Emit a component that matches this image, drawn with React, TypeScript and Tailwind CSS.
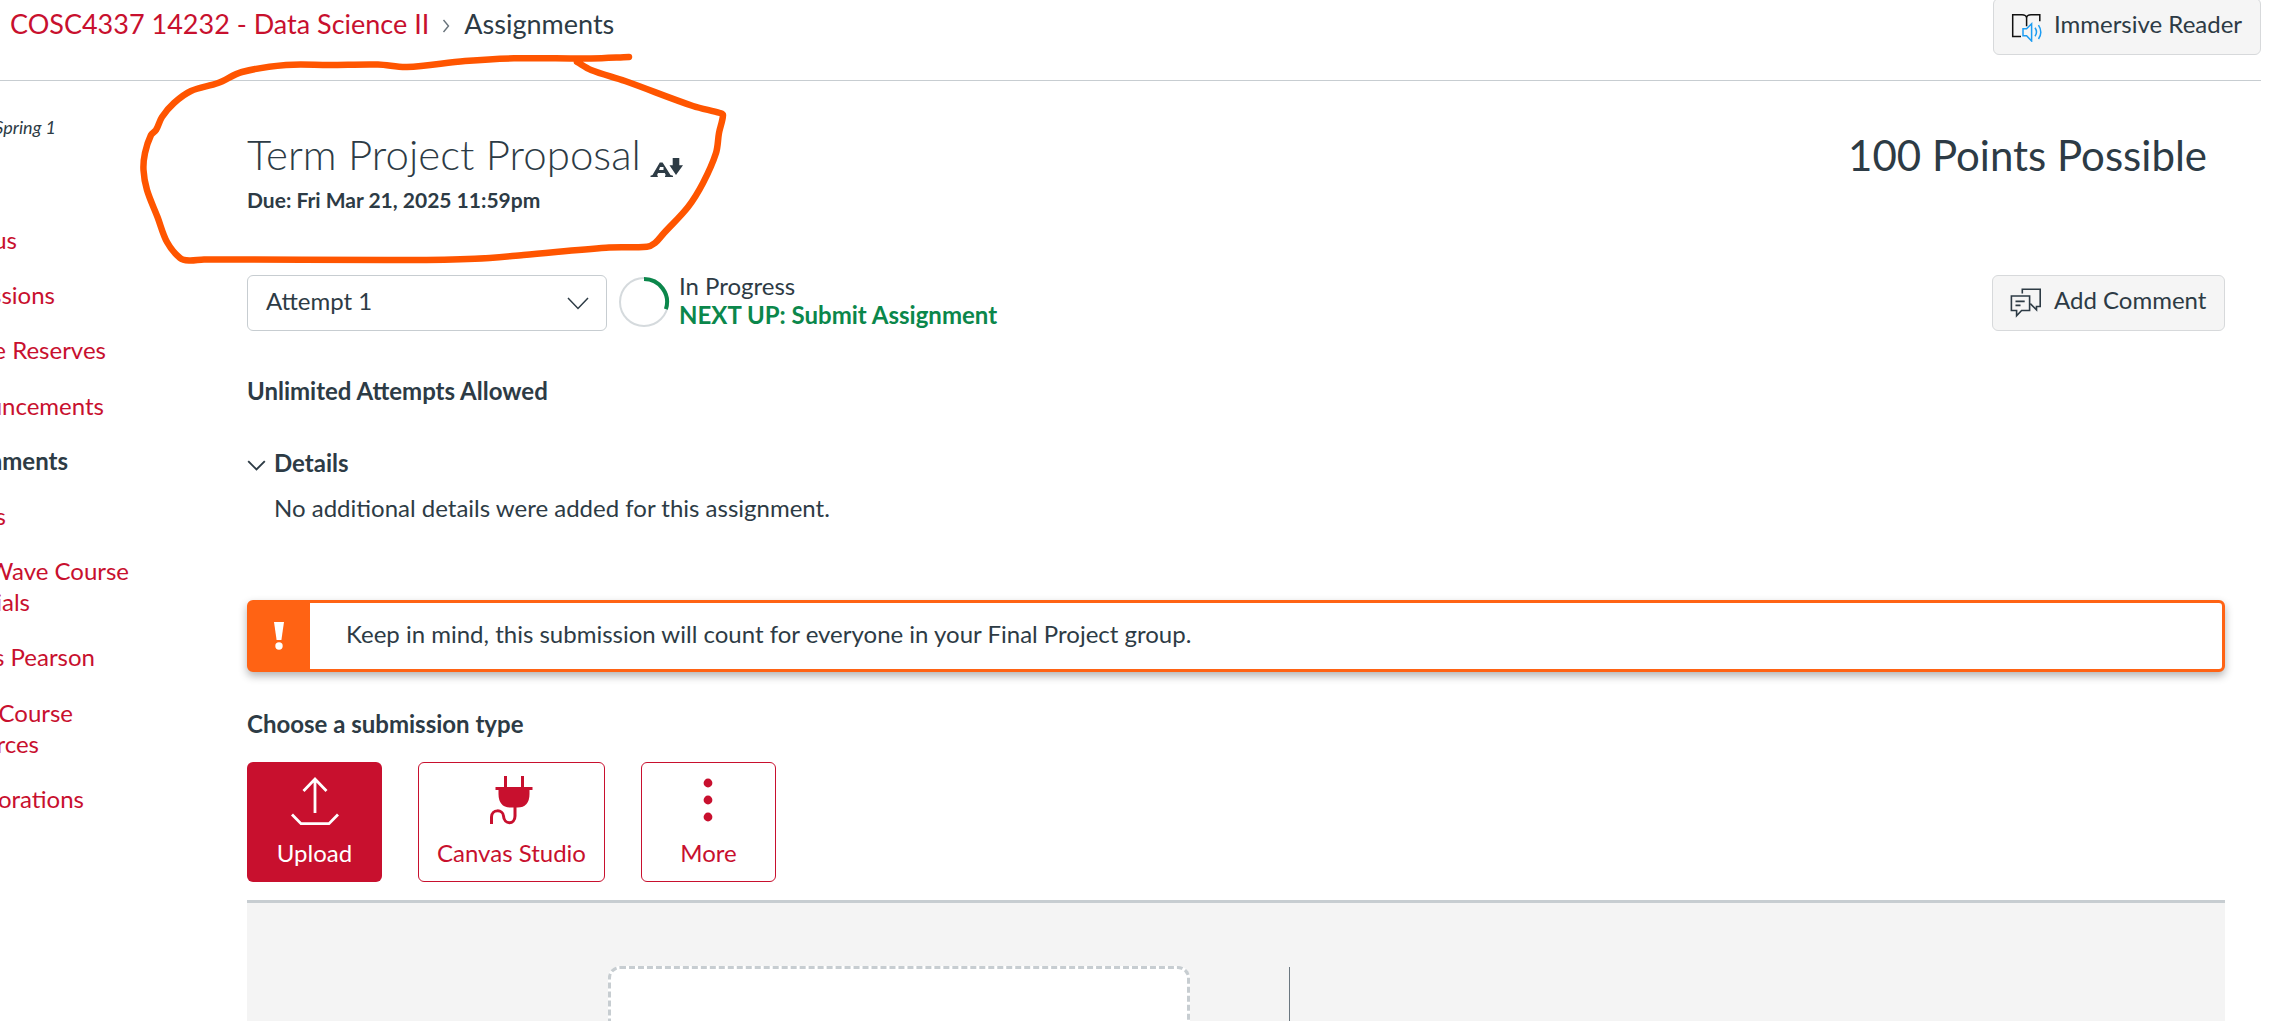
import React from "react";

const NAV = [
  { w: "w-[17px]", lines: ["bus"] },
  { w: "w-[55px]", lines: ["ssions"] },
  { w: "w-[106px]", lines: ["e Reserves"] },
  { w: "w-[104px]", lines: ["uncements"] },
  { w: "w-[68px]", lines: ["nments"], active: true },
  { w: "w-[6px]", lines: ["s"] },
  { w: "w-[129px]", lines: ["Wave Course"], second: "ials", w2: "w-[30px]" },
  { w: "w-[95px]", lines: ["s Pearson"] },
  { w: "w-[73px]", lines: ["Course"], second: "urces", w2: "w-[39px]" },
  { w: "w-[84px]", lines: ["orations"] },
];

const STROKE: [number, number][] = [
  [629, 57], [591, 58.5], [514, 58.3], [465, 61], [407, 67], [378, 64.5], [330, 65], [286, 65],
  [242, 72], [218, 83], [191, 91], [174, 103], [162, 117], [156, 130], [151, 135], [145, 153],
  [143.5, 170], [147, 190], [157.5, 217], [167, 242], [180, 258], [189, 260.5], [204, 259.5],
  [407, 260], [475, 258.7], [523.5, 255], [606, 247.7], [647, 246.7], [655, 243], [664, 233],
  [688, 207], [703, 183], [716, 153], [719, 133], [723, 115], [720, 113], [693, 106], [625, 81],
  [591, 70], [577, 62],
];

// Joins the points with Catmull-Rom segments so that the marker line looks hand drawn.
function smooth(p: [number, number][]) {
  let d = `M${p[0][0]} ${p[0][1]}`;
  for (let i = 0; i < p.length - 1; i++) {
    const a = p[i - 1] ?? p[i];
    const b = p[i];
    const c = p[i + 1];
    const e = p[i + 2] ?? c;
    const k = Math.hypot(c[0] - b[0], c[1] - b[1]) / 3;
    const l1 = Math.hypot(c[0] - a[0], c[1] - a[1]) || 1;
    const l2 = Math.hypot(e[0] - b[0], e[1] - b[1]) || 1;
    d += `C${b[0] + ((c[0] - a[0]) / l1) * k} ${b[1] + ((c[1] - a[1]) / l1) * k} ${c[0] - ((e[0] - b[0]) / l2) * k} ${c[1] - ((e[1] - b[1]) / l2) * k} ${c[0]} ${c[1]}`;
  }
  return d;
}

function Marker() {
  return (
    <svg className="pointer-events-none absolute top-0 left-0" width="760" height="280" fill="none">
      <path d={smooth(STROKE)} stroke="#ff5500" strokeWidth="6.500" strokeLinecap="round" strokeLinejoin="round" />
    </svg>
  );
}

function ReaderIcon() {
  return (
    <svg width="32" height="30" viewBox="0 -1.200 32 30" fill="none">
      <path d="M10 23.400H1.700V1.600H11q4 0 4.600 3Q16 1.600 20 1.600h8.800V8M15.600 4.600V13" stroke="#111" strokeWidth="1.500" />
      <path d="M12 15.500h3.600l5-5v17.300l-5-5.300H12zM24 14.500q3 4.300 0 8.600M27.500 12q4.600 7 0 13.800" stroke="#1c9cf2" strokeWidth="1.500" />
    </svg>
  );
}

function CommentIcon() {
  return (
    <svg width="32" height="30" viewBox="0 0 32 30" fill="none" stroke="#2d3b45" strokeWidth="1.600">
      <path d="M1.400 8h18.200v14.500h-8l-5 5.200v-5.200H1.400zM5.500 13.400h9.200M5.500 17.400h5" />
      <path d="M12.300 5.500V1.200H30.200v17.300h-3.700v3.300l-6.200-6.200" />
    </svg>
  );
}

function SpeakIcon() {
  return (
    <svg width="34" height="21" viewBox="0 0 34 21" fill="#2d3b45">
      <path fillRule="evenodd" d="M.5 20v-1.200l2-.8L9.800 5.500h2.800L20.500 18l2.500.8V20h-8v-1.200l.8-.6-1-2.200H8l-1 2.200.8.6V20zM9 13h4.500v-3H10z" />
      <path d="M22.700 1h6.600v7.200H33L26 18l-6.500-9.800h3.200z" />
    </svg>
  );
}

export default function App() {
  return (
    <div className="relative flex h-[1021px] w-[2290px] flex-col overflow-hidden bg-white font-['Lato',sans-serif] text-[24px] leading-[30px] text-[#2d3b45]">
      <header className="mr-[29px] flex h-[81px] shrink-0 items-start justify-between border-b border-[#c7cdd1]">
        <nav className="ml-[10px] flex items-center pt-[9px] text-[27px]">
          <span className="text-[#c8102e]">COSC4337 14232 - Data Science II</span>
          <svg className="mr-[14px] ml-[13px] mt-1" width="8" height="14" viewBox="0 0 8 14" fill="none">
            <path d="M1.500 1 6.500 7l-5 6" stroke="#68737b" strokeWidth="1.400" />
          </svg>
          <span>Assignments</span>
        </nav>
        <button className="-mt-[2px] flex h-[57px] w-[268px] items-center rounded-[6px] border border-[#d7d9db] bg-[#f5f5f5] pl-[17px]">
          <ReaderIcon />
          <span className="ml-[11px] pb-[5px]">Immersive Reader</span>
        </button>
      </header>

      <div className="flex min-h-0 flex-1">
        <aside className="w-[247px] shrink-0 text-[#c8102e]">
          <div className="mt-[35px] flex w-[56px] justify-end text-[18px] leading-[22px] whitespace-nowrap text-[#2d3b45] italic">Spring 1</div>
          <ul className="mt-[86px] flex flex-col gap-[24.200px] leading-[31px] whitespace-nowrap">
            {NAV.map((n) => (
              <li key={n.lines[0]} className={n.active ? "font-bold text-[#2d3b45]" : ""}>
                <div className={`flex justify-end ${n.w}`}>{n.lines[0]}</div>
                {n.second && <div className={`flex justify-end ${n.w2}`}>{n.second}</div>}
              </li>
            ))}
          </ul>
        </aside>

        <main className="flex w-[1978px] flex-col">
          <div className="flex h-[194px] shrink-0 justify-between pt-[49px]">
            <div>
              <div className="flex items-start">
                <h1 className="-mt-px text-[42px] leading-[50px] font-light">Term Project Proposal</h1>
                <div className="mt-[27px] ml-[9px]"><SpeakIcon /></div>
              </div>
              <p className="mt-[7px] text-[21px] leading-[27px] font-bold">Due: Fri Mar 21, 2025 11:59pm</p>
            </div>
            <div className="mr-[18px] text-[42px] leading-[50px]">100 Points Possible</div>
          </div>

          <div className="flex h-[56px] shrink-0 items-start">
            <div className="flex h-[56px] w-[360px] items-center justify-between rounded-[6px] border border-[#c7cdd1] pr-[17px] pl-[18px]">
              <span className="pb-[4px]">Attempt 1</span>
              <svg width="22" height="13" viewBox="0 0 22 13" fill="none">
                <path d="m1 1 10 10.500L21 1" stroke="#2d3b45" strokeWidth="1.500" />
              </svg>
            </div>
            <svg className="mt-[1px] ml-[11px]" width="52" height="52" viewBox="0 0 52 52" fill="none">
              <circle cx="26" cy="26" r="24" stroke="#d5dadd" strokeWidth="2" />
              <path d="M26 3a23 23 0 0 1 21.900 30.100" stroke="#0b874b" strokeWidth="4" />
            </svg>
            <div className="-mt-[4px] ml-[9px] leading-[29px]">
              <div>In Progress</div>
              <div className="font-bold text-[#0b874b]">NEXT UP: Submit Assignment</div>
            </div>
            <button className="ml-auto flex h-[56px] w-[233px] items-center rounded-[6px] border border-[#d7d9db] bg-[#f5f5f5] pl-[17px]">
              <CommentIcon />
              <span className="ml-[12px] pb-[6px]">Add Comment</span>
            </button>
          </div>

          <p className="mt-[45px] font-bold">Unlimited Attempts Allowed</p>

          <div className="mt-[42px] flex items-center font-bold">
            <svg className="mt-[4px] mr-[8px]" width="19" height="11" viewBox="0 0 19 11" fill="none">
              <path d="m1.200 1.200 8.300 8.300 8.300-8.300" stroke="#2d3b45" strokeWidth="1.900" />
            </svg>
            Details
          </div>
          <p className="mt-[15px] ml-[27px]">No additional details were added for this assignment.</p>

          <div className="mt-[77px] flex h-[72px] shrink-0 rounded-[6px] border-[3px] border-[#ff6314] bg-white shadow-[0_4px_9px_rgba(0,0,0,0.3)]">
            <div className="flex w-[60px] items-center justify-center bg-[#ff6314] pr-[2px]">
              <svg width="12" height="28" viewBox="0 0 12 28" fill="#fff">
                <path d="M1 0h10L8.400 18H3.600z" />
                <circle cx="6" cy="24" r="3.700" />
              </svg>
            </div>
            <p className="mt-[16px] ml-[36px]">Keep in mind, this submission will count for everyone in your Final Project group.</p>
          </div>

          <h2 className="mt-[37px] font-bold">Choose a submission type</h2>

          <div className="mt-[23px] flex h-[120px] shrink-0 gap-[36px] text-[#c8102e]">
            <button className="flex w-[135px] flex-col items-center rounded-[6px] bg-[#c8102e] pt-[14px] text-white">
              <svg width="50" height="50" viewBox="0 0 50 50" fill="none" stroke="#fff" strokeWidth="2.800">
                <path d="M25 37V3M13.500 15 25 3l11.500 12M2 38.500 11 47.700h28l9-9.200" />
              </svg>
              <span className="mt-[12px]">Upload</span>
            </button>
            <button className="flex w-[187px] flex-col items-center rounded-[6px] border border-[#c8102e] pt-[13px]">
              <svg className="mr-[2px]" width="44" height="50" viewBox="0 0 44 50" fill="none" stroke="#c8102e" strokeWidth="3">
                <path d="M16.500 0v12M33.500 0v12M6.500 12.500h37" />
                <path d="M9.500 12.500h31v5q0 14-12 14h-7q-12 0-12-14z" fill="#c8102e" stroke="none" />
                <path d="M26 30v10c0 9-11 9-11.500 0C14 33 2.500 33 2.500 41v7" />
              </svg>
              <span className="mt-[12px]">Canvas Studio</span>
            </button>
            <button className="flex w-[135px] flex-col items-center rounded-[6px] border border-[#c8102e] pt-[13px]">
              <svg className="mr-[1px]" width="50" height="50" viewBox="0 0 50 50" fill="#c8102e">
                <circle cx="25" cy="7" r="4.400" />
                <circle cx="25" cy="24" r="4.400" />
                <circle cx="25" cy="41" r="4.400" />
              </svg>
              <span className="mt-[12px]">More</span>
            </button>
          </div>

          <section className="mt-[18px] flex h-[200px] shrink-0 border-t-[3px] border-[#c7cdd1] bg-[#f4f4f4] pt-[63px] pl-[361px]">
            <div className="h-[200px] w-[582px] rounded-[12px] border-[3px] border-dashed border-[#c7cdd1] bg-white" />
            <div className="mt-[1px] ml-[99px] h-[200px] w-px bg-[#6b7780]" />
          </section>
        </main>
      </div>
      <Marker />
    </div>
  );
}
